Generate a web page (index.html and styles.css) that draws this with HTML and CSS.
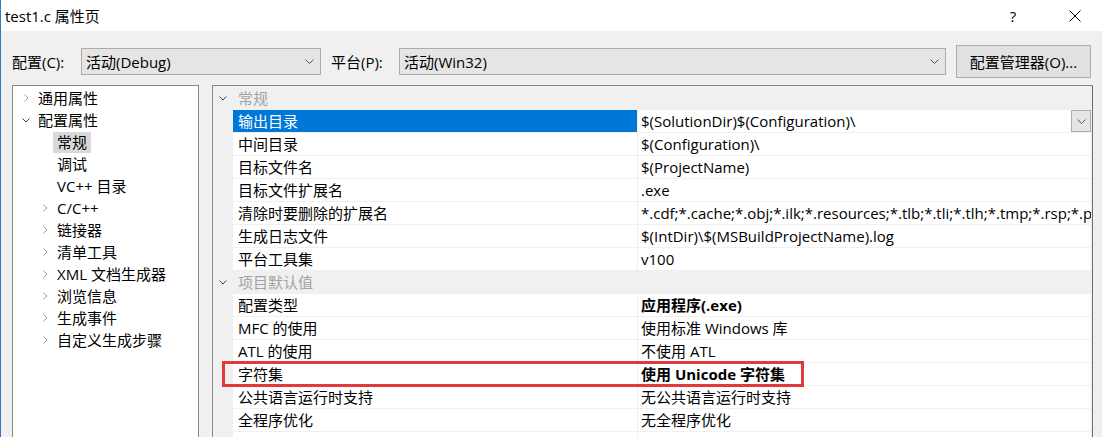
FILE: index.html
```html
<!DOCTYPE html>
<html lang="zh-CN">
<head>
<meta charset="utf-8">
<title>test1.c 属性页</title>
<link rel="stylesheet" href="styles.css">
</head>
<body>
<div class="window">
  <div class="titlebar">
    <span class="title">test1.c 属性页</span>
    <div class="tb-buttons">
      <span class="help">?</span>
      <span class="close"><svg width="12" height="12" viewBox="0 0 12 12"><path d="M0.5 0.5L11.5 11.5M11.5 0.5L0.5 11.5" stroke="#000" stroke-width="1" fill="none"/></svg></span>
    </div>
  </div>
  <div class="content">
    <div class="toolbar">
      <span class="lbl lbl-config">配置(C):</span>
      <div class="combo combo-config"><span class="combo-text">活动(Debug)</span><svg class="combo-chev" width="9" height="5" viewBox="0 0 9 5"><path d="M0.5 0.5L4.5 4.5L8.5 0.5" stroke="#555" fill="none"/></svg></div>
      <span class="lbl lbl-platform">平台(P):</span>
      <div class="combo combo-platform"><span class="combo-text">活动(Win32)</span><svg class="combo-chev" width="9" height="5" viewBox="0 0 9 5"><path d="M0.5 0.5L4.5 4.5L8.5 0.5" stroke="#555" fill="none"/></svg></div>
      <button class="btn">配置管理器(O)...</button>
    </div>
    <div class="main">
      <div class="tree">
        <div class="item lvl1"><span class="chev"><svg width="5" height="8" viewBox="0 0 5 8"><path d="M0.5 0.5L4 4L0.5 7.5" stroke="#a0a0a0" fill="none"/></svg></span><span class="label">通用属性</span></div>
        <div class="item lvl1"><span class="chev"><svg width="8" height="5" viewBox="0 0 8 5"><path d="M0.5 0.5L4 4L7.5 0.5" stroke="#444" fill="none"/></svg></span><span class="label">配置属性</span></div>
        <div class="item lvl2"><span class="chev"></span><span class="label selected">常规</span></div>
        <div class="item lvl2"><span class="chev"></span><span class="label">调试</span></div>
        <div class="item lvl2"><span class="chev"></span><span class="label">VC++ 目录</span></div>
        <div class="item lvl2"><span class="chev"><svg width="5" height="8" viewBox="0 0 5 8"><path d="M0.5 0.5L4 4L0.5 7.5" stroke="#a0a0a0" fill="none"/></svg></span><span class="label">C/C++</span></div>
        <div class="item lvl2"><span class="chev"><svg width="5" height="8" viewBox="0 0 5 8"><path d="M0.5 0.5L4 4L0.5 7.5" stroke="#a0a0a0" fill="none"/></svg></span><span class="label">链接器</span></div>
        <div class="item lvl2"><span class="chev"><svg width="5" height="8" viewBox="0 0 5 8"><path d="M0.5 0.5L4 4L0.5 7.5" stroke="#a0a0a0" fill="none"/></svg></span><span class="label">清单工具</span></div>
        <div class="item lvl2"><span class="chev"><svg width="5" height="8" viewBox="0 0 5 8"><path d="M0.5 0.5L4 4L0.5 7.5" stroke="#a0a0a0" fill="none"/></svg></span><span class="label">XML 文档生成器</span></div>
        <div class="item lvl2"><span class="chev"><svg width="5" height="8" viewBox="0 0 5 8"><path d="M0.5 0.5L4 4L0.5 7.5" stroke="#a0a0a0" fill="none"/></svg></span><span class="label">浏览信息</span></div>
        <div class="item lvl2"><span class="chev"><svg width="5" height="8" viewBox="0 0 5 8"><path d="M0.5 0.5L4 4L0.5 7.5" stroke="#a0a0a0" fill="none"/></svg></span><span class="label">生成事件</span></div>
        <div class="item lvl2"><span class="chev"><svg width="5" height="8" viewBox="0 0 5 8"><path d="M0.5 0.5L4 4L0.5 7.5" stroke="#a0a0a0" fill="none"/></svg></span><span class="label">自定义生成步骤</span></div>
      </div>
      <div class="grid">
        <div class="cat"><span class="gutter"><svg width="8" height="5" viewBox="0 0 8 5"><path d="M0.5 0.5L4 4L7.5 0.5" stroke="#444" fill="none"/></svg></span><span class="cat-name">常规</span></div>
        <div class="row selected"><span class="gutter"></span><span class="name">输出目录</span><span class="value"><span class="vtext">$(SolutionDir)$(Configuration)\</span><span class="dd"><svg width="9" height="5" viewBox="0 0 9 5"><path d="M0.5 0.5L4.5 4.5L8.5 0.5" stroke="#555" fill="none"/></svg></span></span></div>
        <div class="row"><span class="gutter"></span><span class="name">中间目录</span><span class="value"><span class="vtext">$(Configuration)\</span></span></div>
        <div class="row"><span class="gutter"></span><span class="name">目标文件名</span><span class="value"><span class="vtext">$(ProjectName)</span></span></div>
        <div class="row"><span class="gutter"></span><span class="name">目标文件扩展名</span><span class="value"><span class="vtext">.exe</span></span></div>
        <div class="row"><span class="gutter"></span><span class="name">清除时要删除的扩展名</span><span class="value"><span class="vtext">*.cdf;*.cache;*.obj;*.ilk;*.resources;*.tlb;*.tli;*.tlh;*.tmp;*.rsp;*.pgc;*.pgd;*.meta;$(TargetPath)</span></span></div>
        <div class="row"><span class="gutter"></span><span class="name">生成日志文件</span><span class="value"><span class="vtext">$(IntDir)\$(MSBuildProjectName).log</span></span></div>
        <div class="row"><span class="gutter"></span><span class="name">平台工具集</span><span class="value"><span class="vtext">v100</span></span></div>
        <div class="cat"><span class="gutter"><svg width="8" height="5" viewBox="0 0 8 5"><path d="M0.5 0.5L4 4L7.5 0.5" stroke="#444" fill="none"/></svg></span><span class="cat-name">项目默认值</span></div>
        <div class="row"><span class="gutter"></span><span class="name">配置类型</span><span class="value"><span class="vtext bold">应用程序(.exe)</span></span></div>
        <div class="row"><span class="gutter"></span><span class="name">MFC 的使用</span><span class="value"><span class="vtext">使用标准 Windows 库</span></span></div>
        <div class="row"><span class="gutter"></span><span class="name">ATL 的使用</span><span class="value"><span class="vtext">不使用 ATL</span></span></div>
        <div class="row marked"><span class="gutter"></span><span class="name">字符集</span><span class="value"><span class="vtext bold">使用 Unicode 字符集</span></span><span class="annot"></span></div>
        <div class="row"><span class="gutter"></span><span class="name">公共语言运行时支持</span><span class="value"><span class="vtext">无公共语言运行时支持</span></span></div>
        <div class="row"><span class="gutter"></span><span class="name">全程序优化</span><span class="value"><span class="vtext">无全程序优化</span></span></div>
        <div class="row"><span class="gutter"></span><span class="name"></span><span class="value"><span class="vtext"></span></span></div>
      </div>
    </div>
  </div>
</div>
</body>
</html>
```

FILE: styles.css
```css
* { box-sizing: border-box; }
html, body { margin: 0; padding: 0; }
body {
  width: 1102px;
  height: 437px;
  overflow: hidden;
  font-family: "Open Sans", "Noto Sans CJK SC", sans-serif;
  font-size: 15px;
  color: #000;
  background: #f0f0f0;
}
.window {
  width: 1102px;
  height: 437px;
  overflow: hidden;
  border-left: 1px solid #2e7bc4;
  background: #f0f0f0;
  display: flex;
  flex-direction: column;
}
.titlebar {
  height: 31px;
  flex: none;
  background: #fff;
  display: flex;
  align-items: center;
  padding-left: 4px;
}
.title { line-height: 20px; }
.tb-buttons {
  margin-left: auto;
  display: flex;
  align-items: center;
}
.help { width: 14px; text-align: center; margin-right: 49px; line-height: 20px; }
.close { width: 12px; height: 12px; margin-right: 21px; display: flex; }
.content {
  flex: 1;
  padding-left: 11px;
  min-height: 0;
}
.toolbar {
  margin-top: 14px;
  height: 33px;
  display: flex;
  align-items: center;
}
.lbl { line-height: 20px; white-space: nowrap; }
.lbl-config { width: 69px; }
.lbl-platform { width: 68px; margin-left: 10px; }
.combo {
  height: 27px;
  background: #e5e5e5;
  border: 1px solid #acacac;
  display: flex;
  align-items: center;
  padding: 0 0 0 4px;
}
.combo-text { flex: 1; line-height: 20px; }
.combo-chev { margin-right: 6px; }
.combo-config { width: 240px; }
.combo-platform { width: 547px; }
.btn {
  margin-left: 10px;
  width: 135px;
  height: 33px;
  background: #e1e1e1;
  border: 1px solid #adadad;
  font: inherit;
  color: #000;
  padding: 0;
}
.main {
  margin-top: 7px;
  display: flex;
  height: 360px;
}
.tree {
  width: 187px;
  height: 360px;
  background: #fff;
  border: 1px solid #828790;
  padding-top: 1px;
}
.item {
  height: 22px;
  display: flex;
  align-items: center;
}
.lvl1 { padding-left: 7px; }
.lvl2 { padding-left: 26px; }
.chev {
  width: 12px;
  height: 22px;
  display: flex;
  align-items: center;
  justify-content: center;
}
.label {
  margin-left: 2px;
  padding: 0 4px;
  height: 21px;
  line-height: 21px;
  white-space: nowrap;
}
.label.selected { background: #d9d9d9; }
.grid {
  margin-left: 13px;
  width: 881px;
  height: 360px;
  border: 1px solid #828790;
  border-right-color: #6d6d6d;
  background: #f0f0f0;
  padding-top: 1px;
}
.cat, .row {
  height: 22px;
  margin-bottom: 1px;
  display: flex;
  align-items: stretch;
}
.gutter {
  width: 20px;
  flex: none;
  display: flex;
  align-items: center;
  justify-content: center;
}
.cat-name {
  padding-left: 5px;
  line-height: 22px;
  color: #a3a3a3;
}
.name {
  width: 404px;
  flex: none;
  background: #fff;
  padding-left: 5px;
  line-height: 22px;
  white-space: nowrap;
  overflow: hidden;
}
.row.selected .name { background: #0078d7; color: #fff; }
.value {
  width: 453px;
  flex: none;
  margin-left: 1px;
  background: #fff;
  display: flex;
  overflow: hidden;
}
.vtext {
  flex: 1;
  padding-left: 3px;
  line-height: 22px;
  white-space: nowrap;
  overflow: hidden;
}
.vtext.bold { font-weight: bold; }
.dd {
  width: 20px;
  flex: none;
  background: #e5e5e5;
  border: 1px solid #adadad;
  display: flex;
  align-items: center;
  justify-content: center;
}
.row.marked { position: relative; }
.annot {
  position: absolute;
  left: 9px;
  top: -2px;
  width: 582px;
  height: 26px;
  border: 3px solid #e3383d;
  pointer-events: none;
}
```
